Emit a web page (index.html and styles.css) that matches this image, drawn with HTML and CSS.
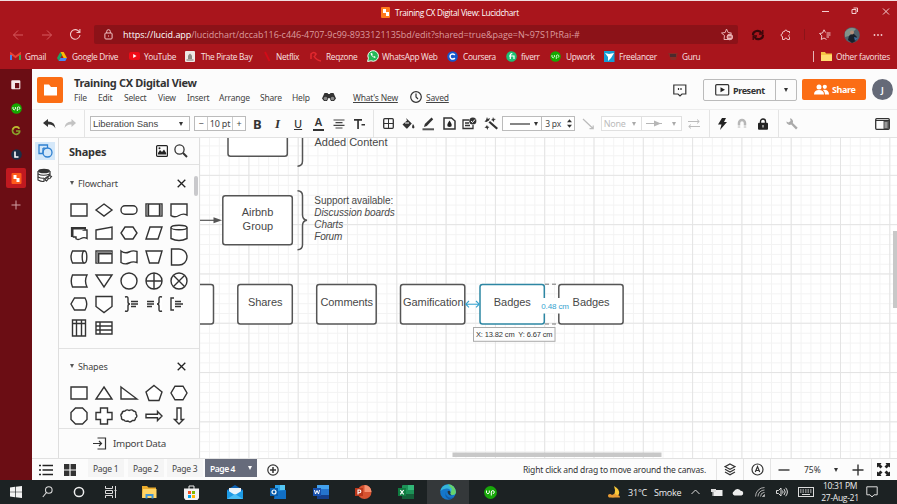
FILE: index.html
```html
<!DOCTYPE html>
<html lang="en">
<head>
<meta charset="utf-8">
<title>Training CX Digital View: Lucidchart</title>
<link rel="stylesheet" href="styles.css">
</head>
<body>
<div class="window">
  <header class="chrome">
    <div class="titlebar">
      <svg width="10" height="11" viewBox="0 0 10 11"><rect width="9" height="11" rx="1" fill="#ff7b1c"/><path d="M2 2h3v3h3v4H5V6H2z" fill="#fff"/></svg>
      <span class="tab-title">Training CX Digital View: Lucidchart</span>
      <svg width="80" height="12" viewBox="0 0 80 12" fill="none" stroke="#f3cfd0"><path d="M5 6.500h7M35 4.500h4v4h-4zM36.500 3h4v4M66 3.500l6 6m0-6l-6 6"/></svg>
    </div>
    <div class="address-row">
      <svg width="13" height="12" viewBox="0 0 13 12" fill="none" stroke="#d65a5e"><path d="M11 6H1.500M6 1.500L1.500 6 6 10.500"/></svg>
      <svg width="13" height="12" viewBox="0 0 13 12" fill="none" stroke="#d65a5e"><path d="M1 6h9.500M6 1.500L10.500 6 6 10.500"/></svg>
      <svg width="13" height="13" viewBox="0 0 13 13" fill="none" stroke="#f0c4c5" stroke-width="1.100"><path d="M10.500 4.200A4.800 4.800 0 1 0 11 7M10.900 1v3.500H7.500"/></svg>
      <div class="url">
        <svg width="9" height="11" viewBox="0 0 9 11" fill="none" stroke="#f0c4c5"><rect x=".9" y="4" width="7.200" height="6" rx="1"/><path d="M2.700 4V2.500a1.800 1.800 0 0 1 3.600 0V4M4.500 6.500v1"/></svg>
        <span class="url-text"><b>https://lucid.app</b>/lucidchart/dccab116-c446-4707-9c99-8933121135bd/edit?shared=true&amp;page=N~97S1PtRai-#</span>
        <svg width="12" height="12" viewBox="0 0 12 12" fill="none" stroke="#e9b0b2"><path d="M8.500 10.500H3l.5-4-3-2.500 3.700-.5L5.500 0l1.600 3.500 3.400.5-1.500 1.500"/><circle cx="8.800" cy="8" r="2.800" fill="#e9b0b2"/><path d="M7.200 8h3.200" stroke="#8f1218"/></svg>
      </div>
      <svg width="14" height="12" viewBox="0 0 14 12" fill="none" stroke="#38060a" stroke-width="2.200"><path d="M2 6a4.500 4 0 0 1 8.500-2M12 6a4.500 4 0 0 1-8.500 2"/><path d="M11.800 1v4H8M2.200 11V7H6" stroke-width="1.300"/></svg>
      <svg width="12" height="12" viewBox="0 0 12 12" fill="none" stroke="#f0c4c5"><path d="M9.500 4.200V2.500H7.300a1.400 1.400 0 0 0-2.800 0H3.800Q2.500 2.500 2.500 4v.7a1.400 1.400 0 0 0 0 2.800V10.500h2a1.400 1.400 0 0 1 2.800 0h2.200V8.200a1.500 1.500 0 0 1 0-2.600"/></svg>
      <i class="chrome-sep"></i>
      <svg width="12" height="12" viewBox="0 0 12 12" fill="none" stroke="#f0c4c5"><path d="M6.500 3.500L5 .8 3.500 4 .5 4.500l2.300 2.300-.5 3.700L5 9l2.500 1.500M7.500 4h4M7.500 6h4M7.500 8H10"/></svg>
      <svg width="16" height="16" viewBox="0 0 16 16"><circle cx="8" cy="8" r="7.800" fill="#51616b"/><path d="M1 5a8 8 0 0 1 11-3L8 6 5 9l-4 1z" fill="#82938a"/><path d="M4 13l1-4 4-3 4 4-1 4-4 2z" fill="#17202b"/><circle cx="8" cy="5.500" r="2" fill="#b4907b"/><path d="M10 10l4 1-3 3z" fill="#426d9e"/></svg>
      <svg width="10" height="4" viewBox="0 0 10 4" fill="#f3cfd0"><circle cx="1.500" cy="2" r=".9"/><circle cx="5" cy="2" r=".9"/><circle cx="8.500" cy="2" r=".9"/></svg>
    </div>
    <nav class="bookmarks">
      <svg width="11" height="9" viewBox="0 0 11 9"><path d="M1 8V1.500l4.500 3.500L10 1.500V8" fill="none" stroke="#ea4335" stroke-width="1.900"/><path d="M1 8V3" stroke="#4285f4" stroke-width="1.900"/><path d="M10 8V3" stroke="#34a853" stroke-width="1.900"/></svg><span>Gmail</span>
      <svg width="10" height="9" viewBox="0 0 10 9"><path d="M3.300 0h3.400L10 6H6.600z" fill="#fbbc05"/><path d="M3.300 0L0 6l1.700 3L5 3z" fill="#1ea362"/><path d="M1.700 9h6.600L10 6H3.400z" fill="#4688f4"/></svg><span>Google Drive</span>
      <svg width="11" height="8" viewBox="0 0 11 8"><rect width="11" height="8" rx="2" fill="#f10b16"/><path d="M4.200 2v4l3.300-2z" fill="#fff"/></svg><span>YouTube</span>
      <svg width="10" height="11" viewBox="0 0 10 11"><rect width="10" height="11" rx="1" fill="#eee8e4"/><path d="M3 8V4.500l2-2 2 2V8z" fill="#8d8a84"/><path d="M1.500 9h7" stroke="#72706b"/></svg><span>The Pirate Bay</span>
      <svg width="7" height="11" viewBox="0 0 7 11"><path d="M1 1l4.500 9" stroke="#d30b18" stroke-width="1.800"/></svg><span>Netflix</span>
      <svg width="12" height="11" viewBox="0 0 12 11"><path d="M1 8V3q3-3 5 0-2 3-2 2 2 4 7 5" stroke="#e2282e" stroke-width="1.600" fill="none"/></svg><span>Reqzone</span>
      <svg width="12" height="12" viewBox="0 0 12 12"><path d="M.6 11.500l.8-3.200A5.300 5.300 0 1 1 4 10.800z" fill="#25b857" stroke="#f4fff7"/><path d="M3.500 3.300c.5 2.500 2 4.200 4.500 4.700L8.700 7 7.200 6l-.8.700L5.200 5.300 5.700 4.200 5 3z" fill="#fff"/></svg><span>WhatsApp Web</span>
      <svg width="11" height="11" viewBox="0 0 11 11"><circle cx="5.500" cy="5.500" r="5.300" fill="#1558cc"/><path d="M7.800 4A2.600 2.600 0 1 0 7.800 7" fill="none" stroke="#fff" stroke-width="1.500"/></svg><span>Coursera</span>
      <svg width="11" height="11" viewBox="0 0 11 11"><circle cx="5.500" cy="5.500" r="5.300" fill="#1dbf73"/><path d="M3 5h5v3M4.300 8V4q0-1.500 2-1.300" fill="none" stroke="#fff" stroke-width="1.200"/></svg><span>fiverr</span>
      <svg width="11" height="11" viewBox="0 0 11 11"><circle cx="5.500" cy="5.500" r="5.300" fill="#15a800"/><path d="M2 4v2q1.200 1.800 2.400 0V4M6.300 8V5a1.300 1.300 0 1 1 1.300 1.500" fill="none" stroke="#d8ffd2" stroke-width=".9"/></svg><span>Upwork</span>
      <svg width="11" height="11" viewBox="0 0 11 11"><rect width="10.500" height="11" fill="#159ed5"/><path d="M1 2l4 1 5-1-3 5-3 3V6z" fill="#fff"/></svg><span>Freelancer</span>
      <svg width="10" height="9" viewBox="0 0 10 9"><path d="M0 1h10L8 8H3z" fill="#8a2a25"/><path d="M2 2h6v3H2z" fill="#4b2b2d"/></svg><span>Guru</span>
      <i class="bookmark-sep"></i>
      <svg width="11" height="9" viewBox="0 0 11 9"><path d="M0 0h4l1 1.500h6V9H0z" fill="#f6c544"/><path d="M0 3h11v6H0z" fill="#ffdc70"/></svg><span>Other favorites</span>
    </nav>
  </header>

  <div class="main">
    <aside class="vtabs">
      <svg width="10" height="10" viewBox="0 0 10 10"><rect x=".8" y=".8" width="8" height="8" rx=".5" fill="#6a0e14" stroke="#f6e9e9" stroke-width="1.100"/><path d="M1 1h3v8H1zM1 1h8v2H1z" fill="#f6e9e9"/></svg>
      <svg width="11" height="11" viewBox="0 0 11 11"><circle cx="5.500" cy="5.500" r="5.300" fill="#15a800"/><path d="M2 4v2q1.200 1.800 2.400 0V4M6.300 8V5a1.300 1.300 0 1 1 1.300 1.500" fill="none" stroke="#fff" stroke-width=".9"/></svg>
      <svg width="10" height="10" viewBox="0 0 10 10"><path d="M8.300 2.600A3.700 3.700 0 1 0 8.600 6V5H5" fill="none" stroke="#88a22a" stroke-width="1.700"/><path d="M8.300 2.600A3.700 3.700 0 0 0 1.700 3.500" fill="none" stroke="#c4b230" stroke-width="1.700"/></svg>
      <svg width="11" height="11" viewBox="0 0 11 11"><circle cx="5.500" cy="5.500" r="5.300" fill="#1c2e45"/><path d="M4 2.500V8h3.500" fill="none" stroke="#fff" stroke-width="1.600"/></svg>
      <div class="vtab-active"><svg width="11" height="11" viewBox="0 0 10 11"><rect width="10" height="11" rx="1" fill="#ff5a1c"/><path d="M2 2h3v3h3v4H5V6H2z" fill="#fff"/></svg></div>
      <svg width="10" height="10" viewBox="0 0 10 10"><path d="M5 .5v9M.5 5h9" stroke="#d2a2a5"/></svg>
    </aside>

    <div class="app">
      <div class="app-header">
        <div class="logo"><svg width="26" height="26" viewBox="0 0 26 26"><path d="M7 7.500h5l2 2.500h6v8.500H7z" fill="#fff"/></svg></div>
        <div class="doc">
          <h1>Training CX Digital View</h1>
          <nav class="menus">
            <span>File</span><span>Edit</span><span>Select</span><span>View</span><span>Insert</span><span>Arrange</span><span>Share</span><span>Help</span>
            <svg width="14" height="10" viewBox="0 0 14 10"><path d="M2.500 1h3l.7 1h1.600l.7-1h3L14 6.500 12 9H9L7.500 6h-1L5 9H2L0 6.500z" fill="#333"/><circle cx="3.500" cy="6.500" r="1.800" fill="#888"/><circle cx="10.500" cy="6.500" r="1.800" fill="#888"/></svg>
            <u>What's New</u>
            <svg width="12" height="12" viewBox="0 0 12 12" fill="none" stroke="#333" stroke-width="1.200"><circle cx="6" cy="6" r="5.300"/><path d="M6 2.500V6l2 2"/></svg>
            <u>Saved</u>
          </nav>
        </div>
        <svg class="feedback" width="14" height="13" viewBox="0 0 14 13" fill="none" stroke="#333" stroke-width="1.200"><path d="M.8 1h12v9H9l-2 2-2-2H.8z"/><path d="M5.500 4v2M8 4v2"/></svg>
        <div class="present">
          <span class="present-main"><svg width="15" height="12" viewBox="0 0 15 12"><rect x=".7" y=".7" width="13" height="10.300" rx="1" fill="none" stroke="#333" stroke-width="1.200"/><path d="M5.500 3.300v5L10 5.800z" fill="#222"/></svg>Present</span>
          <span class="present-more"><i class="caret"></i></span>
        </div>
        <div class="share"><svg width="15" height="11" viewBox="0 0 15 11" fill="#fff"><circle cx="5" cy="3" r="2.500"/><path d="M0 10.500Q0 6 5 6t5 4.500z"/><circle cx="10.800" cy="2.800" r="2.100"/><path d="M10 5.700q5 0 5 4.800h-4Q11 7.500 9 6z"/></svg>Share</div>
        <div class="avatar">J</div>
      </div>

      <div class="toolbar">
        <svg width="13" height="10" viewBox="0 0 13 10"><path d="M5 0L0 4l5 4V5.500q5-.5 7.500 4Q12 2.500 5 2.500z" fill="#333"/></svg>
        <svg width="12" height="10" viewBox="0 0 12 10"><path d="M7.500 0L12 4 7.500 8V5.500Q3 5 .5 9 1 2.500 7.500 2.500z" fill="#c3c3c3"/></svg>
        <i class="sep"></i>
        <div class="field font-field"><span>Liberation Sans</span><i class="caret"></i></div>
        <div class="field size-field"><span>−</span><span>10 pt</span><span>+</span></div>
        <b class="glyph">B</b>
        <em class="glyph glyph-i">I</em>
        <u class="glyph glyph-u">U</u>
        <span class="glyph-a">A</span>
        <svg width="12" height="10" viewBox="0 0 12 10" stroke="#444" stroke-width="1.200"><path d="M.5 1h11M2.500 3.700h7M.5 6.400h11M2.500 9h7"/></svg>
        <svg width="11" height="10" viewBox="0 0 11 10" fill="#333"><path d="M0 0h8v1.800H4.900V10H3.200V1.800H0zM7.500 5h3.500v1.400H7.500z"/></svg>
        <i class="sep"></i>
        <svg width="11" height="11" viewBox="0 0 11 11" fill="none" stroke="#333" stroke-width="1.300"><rect x=".7" y=".7" width="9.600" height="9.600" rx="1"/><path d="M5.500 1v9M1 5.500h9" stroke-width="1"/></svg>
        <svg width="13" height="12" viewBox="0 0 13 12"><path d="M4 0l5.800 5.500-4.300 4.800Q5 11 4.200 10.200L.5 6.500 5 2.500" fill="#333"/><path d="M3 5h4" stroke="#fff"/><path d="M11 6q2.800 4 .2 4.500Q9 10 11 6z" fill="#333"/></svg>
        <svg width="13" height="14" viewBox="0 0 13 14"><path d="M2 10l.8-3L9.500.5l1.700 1.700L4.800 9z" fill="#333"/><path d="M.5 12.300h11.500" stroke="#555" stroke-width="2"/></svg>
        <svg width="13" height="13" viewBox="0 0 13 13"><path d="M1 1h7.500L12 4v8H1z" fill="none" stroke="#333" stroke-width="1.500"/><path d="M6.500 3.500q4.800 6.500 0 6.500t0-6.500z" fill="#222"/></svg>
        <svg width="15" height="13" viewBox="0 0 15 13" fill="none" stroke="#333" stroke-width="1.300"><path d="M7 3H1v8.500h10V8M3 6h4M3 8.500h5"/><circle cx="10.800" cy="4" r="3.600" fill="#333" stroke="none"/><path d="M9 4l1.500 1.500L13 2.500" stroke="#fff" stroke-width="1"/></svg>
        <svg width="15" height="13" viewBox="0 0 15 13" fill="#333"><path d="M4.500 5.500L6 4l8 7-1.500 1.500zM3 0l.8 2L6 1 5 3.500 2.500 5 .5 4.500 2 3zM9 0l.8 1.800L12 2l-1.800 1L10 5 8.500 3.500 7 3l1.500-1zM3 8l.7 1.500L5.500 10 4 11l-.5 2-1-2L.5 10.500 2 9.500z"/></svg>
        <div class="field line-field"><span><svg width="20" height="2" viewBox="0 0 20 2"><path d="M0 1h20" stroke="#333" stroke-width="1.200"/></svg><i class="caret"></i></span><span>3 px <svg width="5" height="9" viewBox="0 0 5 9" fill="#333"><path d="M0 3.300h5L2.500.3zM0 5.700h5L2.500 8.700z"/></svg></span></div>
        <svg width="12" height="12" viewBox="0 0 12 12"><path d="M1 1l10 9.500M7.500 10.700h3.700V7.500" stroke="#bbb" stroke-width="1.200" fill="none"/></svg>
        <div class="field ends-field"><span>None<i class="caret"></i></span><span><svg width="17" height="7" viewBox="0 0 17 7"><path d="M0 3.500h16" stroke="#b6b6b6"/><path d="M8 .5l7 3-7 3z" fill="#b6b6b6"/></svg><i class="caret"></i></span></div>
        <svg width="12" height="10" viewBox="0 0 12 10" stroke="#bbb" fill="none"><path d="M0 2.500h11M9 .5l2.300 2L9 4.500M12 7.500H1M3 5.500l-2.300 2 2.300 2"/></svg>
        <i class="sep"></i>
        <svg width="9" height="12" viewBox="0 0 9 12"><path d="M4 0h4L6 4h3L2 12l1.500-5.500H0z" fill="#222"/></svg>
        <svg width="10" height="11" viewBox="0 0 10 11"><path d="M2 9.500V5a3 3 0 0 1 6 0v4.500" fill="none" stroke="#b7b7b7" stroke-width="2.500"/><path d="M0 8h10" stroke="#fff"/></svg>
        <svg width="10" height="12" viewBox="0 0 10 12"><path d="M2.500 6V3.500a2.500 2.500 0 0 1 5 0V6" fill="none" stroke="#222" stroke-width="1.400"/><rect y="4.700" width="10" height="7" rx="1" fill="#222"/><path d="M5 7v2.500" stroke="#fff"/></svg>
        <i class="sep"></i>
        <svg width="12" height="12" viewBox="0 0 12 12"><path d="M4 .3A3.400 3.400 0 0 1 6.800 5L11.700 9.800 10 11.500 5.200 6.600A3.400 3.400 0 0 1 .4 3.500L2.600 4.600 4.600 3z" fill="#aaa"/></svg>
        <svg width="15" height="12" viewBox="0 0 15 12"><rect x=".7" y=".7" width="13.600" height="10.600" rx="1" fill="none" stroke="#333" stroke-width="1.300"/><path d="M1 2.500h13" stroke="#333"/><path d="M8.500 3h5.500v8H8.500z" fill="#555"/><path d="M9.500 5h3M9.500 7h3M9.500 9h3" stroke="#fff" stroke-width=".8"/></svg>
      </div>

      <div class="workspace">
        <aside class="rail">
          <div class="rail-active"><svg width="15" height="14" viewBox="0 0 15 14" fill="none" stroke="#2f80d0" stroke-width="1.300"><path d="M5 9.500H1V1h8.500v3"/><circle cx="9.500" cy="8.500" r="4.500"/><path d="M5 4.200h2.500M5 4v5"/></svg></div>
          <svg width="16" height="15" viewBox="0 0 16 15"><path d="M1 3v9q4 2 6 1.300V11L13 7V3" fill="#fff" stroke="#333" stroke-width="1.200"/><path d="M1 6q5 2.500 12 0M1 9q3 1.500 6 1.200" fill="none" stroke="#333" stroke-width="1.200"/><ellipse cx="7" cy="3" rx="6" ry="2.300" fill="#333"/><path d="M8 12l2-2.500 1.500 1-2 2.500zM11 9.500l1.500-2 2 1-2 2.500" stroke="#333" stroke-width="1.100" fill="#fff"/></svg>
        </aside>
        <aside class="panel">
          <div class="panel-head"><b>Shapes</b>
            <svg width="12" height="12" viewBox="0 0 12 12"><rect x=".6" y=".6" width="10.800" height="10.800" rx="1" fill="none" stroke="#222" stroke-width="1.200"/><path d="M2 9.500V8l2-3 2 2 2-2.500 2.200 3.500v1.500z" fill="#222"/><circle cx="3.500" cy="3.200" r="1" fill="#222"/></svg>
            <svg width="14" height="14" viewBox="0 0 14 14" fill="none" stroke="#333" stroke-width="1.300"><circle cx="5.500" cy="5.500" r="4.600"/><path d="M9 9l4 4" stroke-width="2"/></svg>
          </div>
          <section class="group flow">
            <h2><i class="caret"></i><span>Flowchart</span><svg width="9" height="9" viewBox="0 0 9 9"><path d="M.7.7l7.600 7.600M8.300.7L.7 8.300" stroke="#222" stroke-width="1.300"/></svg></h2>
            <div class="shapes">
              <svg viewBox="0 0 20 20"><path d="M2 4h16v12H2z"/></svg>
              <svg viewBox="0 0 20 20"><path d="M10 4l8 6-8 6-8-6z"/></svg>
              <svg viewBox="0 0 20 20"><rect x="2" y="5.800" width="16" height="8.400" rx="4"/></svg>
              <svg viewBox="0 0 20 20"><path d="M2 4h16v12H2zM4.500 4v12M15.500 4v12"/><path d="M3.300 4v12M16.700 4v12" stroke-width="1.200" stroke="#777"/></svg>
              <svg viewBox="0 0 20 20"><path d="M2 4h16v11q-4-2-8 .5t-8 .2z"/></svg>
              <svg viewBox="0 0 20 20"><path d="M4.500 7H18v8.500q-3-1.800-6 0t-5 .3V14H4.500z"/><path d="M3.200 14V5.200H17" stroke-width="2.600"/></svg>
              <svg viewBox="0 0 20 20"><path d="M2 7l16-3v12H2z"/></svg>
              <svg viewBox="0 0 20 20"><path d="M6 4h8l4 6-4 6H6l-4-6z"/></svg>
              <svg viewBox="0 0 20 20"><path d="M6 4h12l-4 12H2z"/></svg>
              <svg viewBox="0 0 20 20"><path d="M2 4.500v11q8 4 16 0v-11"/><ellipse cx="10" cy="4.500" rx="8" ry="2.300"/></svg>
              <svg viewBox="0 0 20 20"><path d="M15.500 4h-12q-3 6 0 12h12"/><ellipse cx="15.500" cy="10" rx="2.300" ry="6"/></svg>
              <svg viewBox="0 0 20 20"><path d="M2 4h16v12H2z"/><path d="M3.400 16V5.400H18" stroke="#888" stroke-width="1.400"/><path d="M4.700 16V6.700H18"/></svg>
              <svg viewBox="0 0 20 20"><path d="M2 4q4 3 8 1t8-.5v11q-4-1.500-8 .5t-8-.5z"/></svg>
              <svg viewBox="0 0 20 20"><path d="M2 4h16l-3.500 12h-9z"/></svg>
              <svg viewBox="0 0 20 20"><path d="M2.500 2H10a8 8 0 0 1 0 16H2.500z"/></svg>
              <svg viewBox="0 0 20 20"><path d="M3.500 4H18q-3 6 0 12H3.500Q1 10 3.500 4z"/></svg>
              <svg viewBox="0 0 20 20"><path d="M2 4h16l-8 12z"/></svg>
              <svg viewBox="0 0 20 20"><circle cx="10" cy="10" r="8"/></svg>
              <svg viewBox="0 0 20 20"><circle cx="10" cy="10" r="8"/><path d="M10 2v16M2 10h16"/></svg>
              <svg viewBox="0 0 20 20"><circle cx="10" cy="10" r="8"/><path d="M4.500 4.500l11 11M15.500 4.500l-11 11"/></svg>
              <svg viewBox="0 0 20 20"><path d="M5.500 4H16q3.500 6 0 12H5.500L2 10z"/></svg>
              <svg viewBox="0 0 20 20"><path d="M2 2.500h16v10l-8 6-8-6z"/></svg>
              <svg viewBox="0 0 20 20"><path d="M6 3q3-1 3 1.500V8q0 2 2 2-2 0-2 2v3.500Q9 18 6 17"/><path d="M12 7.500h7M12 10h7M12 12.500h5" stroke-width="1.600"/></svg>
              <svg viewBox="0 0 20 20"><path d="M18 3q-3-1-3 1.500V8q0 2-2 2 2 0 2 2v3.500q0 2.500 3 1.500"/><path d="M3 7.500h7M3 10h7M3 12.500h5" stroke-width="1.600"/></svg>
              <svg viewBox="0 0 20 20"><path d="M5 4H2v12h3"/><path d="M6 7.500h6M6 10h8M6 12.500h6" stroke-width="1.600"/></svg>
              <svg viewBox="0 0 20 20"><path d="M3.500 2h13v16h-13zM3.500 5.500h13M7.500 2v16M12.500 2v16"/></svg>
              <svg viewBox="0 0 20 20"><path d="M2 4h16v12H2zM6 4v12M2 8h16M2 12h16"/></svg>
            </div>
          </section>
          <section class="group basic">
            <h2><i class="caret"></i><span>Shapes</span><svg width="9" height="9" viewBox="0 0 9 9"><path d="M.7.7l7.600 7.600M8.300.7L.7 8.300" stroke="#222" stroke-width="1.300"/></svg></h2>
            <div class="shapes">
              <svg viewBox="0 0 20 20"><path d="M2 4h16v12H2z"/></svg>
              <svg viewBox="0 0 20 20"><path d="M10 4l8 12H2z"/></svg>
              <svg viewBox="0 0 20 20"><path d="M2 4l16 12H2z"/></svg>
              <svg viewBox="0 0 20 20"><path d="M10 2.500L18 9l-3 8.500H5L2 9z"/></svg>
              <svg viewBox="0 0 20 20"><path d="M6 3.200h8l4 6.800-4 6.800H6L2 10z"/></svg>
              <svg viewBox="0 0 20 20"><path d="M6.500 2h7L18 6.500v7L13.500 18h-7L2 13.500v-7z"/></svg>
              <svg viewBox="0 0 20 20"><path d="M6.500 2h7v4.500H18v7h-4.500V18h-7v-4.500H2v-7h4.500z"/></svg>
              <svg viewBox="0 0 20 20"><path d="M6 5q2-2 4-.5Q13 3 14.500 5q3 .5 2.500 3 2 2.500-.5 4 0 3-3 2.500Q11 17 9 15q-3 1-4-1-3 0-2.500-3Q1 8.500 3 7.500 3 5 6 5z"/></svg>
              <svg viewBox="0 0 20 20"><path d="M2 8.300h11.500V5.500L18 10l-4.500 4.500v-2.800H2z"/></svg>
              <svg viewBox="0 0 20 20"><path d="M8 2h4v11.500h2.500L10 18l-4.500-4.500H8z"/></svg>
            </div>
          </section>
          <div class="import"><svg width="14" height="13" viewBox="0 0 14 13" fill="none" stroke="#333" stroke-width="1.200"><path d="M4.500 1h8v11h-8M0 6.500h8.500M6 4l2.500 2.500L6 9"/></svg>Import Data</div>
          <i class="panel-thumb"></i>
        </aside>

        <svg class="canvas" width="697" height="320" viewBox="200 138 697 320">
          <defs>
            <pattern id="minor" x="199.100" y="175" width="9.860" height="9.860" patternUnits="userSpaceOnUse"><path d="M0 .5h9.860M.5 0v9.860" stroke="#f3f3f3" fill="none"/></pattern>
            <pattern id="major" x="199.100" y="174.800" width="49.300" height="49.300" patternUnits="userSpaceOnUse"><path d="M0 .5h49.300M.5 0v49.300" stroke="#e4e4e4" fill="none"/></pattern>
          </defs>
          <rect x="200" y="138" width="697" height="320" fill="#fff"/>
          <rect x="200" y="138" width="697" height="320" fill="url(#minor)"/>
          <rect x="200" y="138" width="697" height="320" fill="url(#major)"/>
          <g fill="#fff" stroke="#555" stroke-width="1.500">
            <rect x="228" y="120" width="59.300" height="36.300" rx="2.500"/>
            <rect x="222.800" y="195.700" width="69.500" height="49" rx="2.500"/>
            <rect x="180" y="284.500" width="33.500" height="39.500" rx="2.500"/>
            <rect x="237.800" y="284.500" width="54.500" height="39.500" rx="2.500"/>
            <rect x="316.700" y="284.500" width="59.500" height="39.500" rx="2.500"/>
            <rect x="400.500" y="284.500" width="64.300" height="39.500" rx="2.500"/>
            <rect x="558.800" y="284.500" width="64.300" height="39.500" rx="2.500"/>
            <rect x="480" y="284.500" width="64.300" height="39.500" rx="2.500" stroke="#2d86a3"/>
          </g>
          <g fill="none" stroke="#555" stroke-width="1.500">
            <path d="M302.500 138v23q0 5-5 5.200M297.500 190.800q5 .2 5 5v19q0 5 4.500 5.500-4.500.5-4.500 5.500v19q0 4.800-5 5"/>
            <path d="M200 220.300h15" stroke-width="1.200"/>
            <path d="M545 284.200h14M545 324h14" stroke="#666" stroke-width=".9" stroke-dasharray="4 3"/>
          </g>
          <path d="M213.500 217.300l8.500 3-8.500 3z" fill="#555"/>
          <g class="node-text">
            <text x="314.500" y="145.700" textLength="73">Added Content</text>
            <text x="241.800" y="216.300" textLength="31.500">Airbnb</text>
            <text x="242.600" y="229.600" textLength="30.500">Group</text>
            <text x="248" y="306.300" textLength="34.500">Shares</text>
            <text x="320.500" y="306.300" textLength="52.500">Comments</text>
            <text x="403" y="306.300" textLength="60.500">Gamification</text>
            <text x="493.800" y="306.300" textLength="37">Badges</text>
            <text x="572.600" y="306.300" textLength="37">Badges</text>
          </g>
          <g class="note-text">
            <text x="314.300" y="204.300" textLength="79">Support available:</text>
            <g font-style="italic"><text x="314.300" y="216.200" textLength="80.500">Discussion boards</text>
            <text x="314.300" y="228.200" textLength="29">Charts</text>
            <text x="314.300" y="240.200" textLength="28">Forum</text></g>
          </g>
          <path d="M465.500 304.200h14M469 301l-3.300 3.200 3.300 3.200M476 301l3.300 3.200-3.300 3.200" stroke="#36a3cf" fill="none" stroke-width="1.100"/>
          <rect x="542" y="298" width="27" height="15.500" fill="#fff"/>
          <text class="gap-text" x="541.300" y="309" textLength="27.700">0.48 cm</text>
          <rect x="473.500" y="327.500" width="81.500" height="13.800" fill="#fdfdfd" stroke="#aaa"/>
          <text class="tip-text" x="476" y="337.400" textLength="76.500" xml:space="preserve">X: 13.82 cm  Y: 6.67 cm</text>
          <rect x="452.500" y="452.500" width="209" height="4.500" fill="#c8c8c8"/>
          <rect x="893" y="231" width="4" height="77" fill="#c8c8c8"/>
        </svg>
      </div>

      <footer class="pages">
        <svg width="14" height="12" viewBox="0 0 14 12"><path d="M0 1.500h2M0 6h2M0 10.500h2M3.500 1.500H14M3.500 6H14M3.500 10.500H14" stroke="#222" stroke-width="1.700"/></svg>
        <svg width="12" height="12" viewBox="0 0 12 12"><path d="M0 0h5.400v5.400H0zM6.600 0H12v5.400H6.600zM0 6.600h5.400V12H0zM6.600 6.600H12V12H6.600z" fill="#333"/></svg>
        <span class="page">Page 1</span><span class="page">Page 2</span><span class="page">Page 3</span>
        <span class="page page-on">Page 4<i class="caret"></i></span>
        <svg width="12" height="12" viewBox="0 0 12 12" fill="none" stroke="#333" stroke-width="1.200"><circle cx="6" cy="6" r="5.200"/><path d="M6 3v6M3 6h6" stroke-width="1.500"/></svg>
        <span class="hint">Right click and drag to move around the canvas.</span>
        <i class="sep"></i>
        <svg width="12" height="13" viewBox="0 0 12 13" fill="none" stroke="#333" stroke-width="1.200"><path d="M6 1l5 2.700-5 2.700-5-2.700zM1 6.300L6 9l5-2.700M1 9l5 2.700L11 9"/></svg>
        <i class="sep"></i>
        <svg width="13" height="13" viewBox="0 0 13 13" fill="none" stroke="#333" stroke-width="1.200"><circle cx="6.500" cy="6.500" r="5.500"/><path d="M4.300 9l2.200-5.500L8.700 9M5 7.500h3"/></svg>
        <i class="sep"></i>
        <svg width="12" height="12" viewBox="0 0 12 12"><path d="M.5 6h11" stroke="#333" stroke-width="1.400"/></svg>
        <span class="zoom">75%</span>
        <i class="caret"></i>
        <svg width="12" height="12" viewBox="0 0 12 12"><path d="M.5 6h11M6 .5v11" stroke="#333" stroke-width="1.400"/></svg>
        <i class="sep"></i>
        <svg width="13" height="13" viewBox="0 0 13 13" fill="#222"><path d="M0 0h4.500L3.400 1.400 5.500 3.500l-2 2L1.400 3.400 0 4.500zM13 0v4.500L11.600 3.400 9.500 5.500l-2-2L9.600 1.400 8.500 0zM0 13V8.500l1.400 1.100L3.500 7.500l2 2-2.100 2.100L4.500 13zM13 13H8.500l1.100-1.400L7.500 9.500l2-2 2.100 2.100L13 8.500z"/></svg>
      </footer>
    </div>
  </div>

  <div class="taskbar">
    <svg width="12" height="12" viewBox="0 0 12 12" fill="#f2f2f2"><path d="M0 1.500l5-.7v4.900H0zM5.700.7L12 0v5.700H5.700zM0 6.300h5v4.900l-5-.7zM5.700 6.300H12V12l-6.300-.7z"/></svg>
    <svg width="11" height="12" viewBox="0 0 11 12" fill="none" stroke="#ddd" stroke-width="1.100"><circle cx="6.800" cy="4" r="3.300"/><path d="M4.500 6.500L.8 11"/></svg>
    <svg width="12" height="12" viewBox="0 0 12 12" fill="none" stroke="#eee" stroke-width="1.500"><circle cx="6" cy="6" r="4.600"/></svg>
    <svg width="12" height="12" viewBox="0 0 12 12" fill="none" stroke="#ddd"><path d="M.5 0v2.500h7V0M.5 4.500h7v3h-7zM.5 12V9.500h7V12M10.500 0v12M9.500 4.500h2"/></svg>
    <svg width="15" height="13" viewBox="0 0 15 13"><path d="M0 0h5l1.500 1.500H14V11H0z" fill="#e9ab2c"/><path d="M1 3h13.500v9H0z" fill="#ffd567"/><path d="M3.500 12.500V8h8v4.500H9.500V10h-4v2.500z" fill="#3f94d8"/></svg>
    <svg width="15" height="15" viewBox="0 0 15 15"><path d="M0 3.500h15V13l-1.500 2h-12L0 13z" fill="#f3f3f3"/><path d="M5 4V1h5v3" fill="none" stroke="#eee"/><path d="M4 6h3v3H4z" fill="#f25022"/><path d="M8 6h3v3H8z" fill="#7fba00"/><path d="M4 10h3v3H4z" fill="#00a4ef"/><path d="M8 10h3v3H8z" fill="#ffb900"/></svg>
    <svg width="16" height="14" viewBox="0 0 16 14"><path d="M0 5l8-5 8 5v9H0z" fill="#0c62b4"/><path d="M2 3h12v7H2z" fill="#e9f4fb"/><path d="M0 5l8 5 8-5v9H0z" fill="#1d9be6"/><path d="M0 14l8-5 8 5z" fill="#49bdf4"/></svg>
    <svg width="16" height="14" viewBox="0 0 16 14"><path d="M5 0h10v10H5z" fill="#2aa0e8"/><path d="M5 6l11-1v9H4z" fill="#116fc4"/><path d="M10 0h5v5h-5z" fill="#54c7f4"/><rect y="3" width="8" height="8" fill="#075ba9"/><circle cx="4" cy="7" r="2" fill="none" stroke="#fff" stroke-width="1.200"/></svg>
    <svg width="16" height="14" viewBox="0 0 16 14"><rect x="4" width="12" height="14" rx="1" fill="#2574ce"/><path d="M4 0h12v4H4z" fill="#43a1ed"/><path d="M4 10h12v4H4z" fill="#153f8c"/><rect y="3" width="8" height="8" fill="#174fac"/><path d="M1.500 5l1 4L4 5.500 5.500 9l1-4" fill="none" stroke="#fff"/></svg>
    <svg width="17" height="14" viewBox="0 0 17 14"><circle cx="9.500" cy="7" r="7" fill="#d65331"/><path d="M9.500 0a7 7 0 0 1 7 7h-7z" fill="#f59070"/><rect y="3" width="8" height="8" fill="#b9371b"/><path d="M3 9.500V5h1.500a1.300 1.300 0 0 1 0 2.700H3" fill="none" stroke="#fff" stroke-width="1.100"/></svg>
    <svg width="16" height="14" viewBox="0 0 16 14"><rect x="4" width="12" height="14" rx="1" fill="#1d9358"/><path d="M10 0h6v5h-6z" fill="#32b878"/><path d="M4 9h12v5H4z" fill="#155f39"/><rect y="3" width="8" height="8" fill="#107c41"/><path d="M2.300 5l3.400 4.300M5.700 5L2.300 9.300" stroke="#fff" stroke-width="1.200"/></svg>
    <div class="task-on"><svg width="16" height="16" viewBox="0 0 16 16"><circle cx="8" cy="8" r="7.800" fill="#1577ca"/><path d="M.3 7A7.800 7.800 0 0 1 15.800 8q0 3-3.500 3-3-.2-1.800-2.500Q11 5 7 4.500 3 4.300.3 7z" fill="#36b5d8"/><path d="M8 .2A7.800 7.800 0 0 1 15.800 8q0 3-3.500 3-2-.2-1.800-2L12 5z" fill="#67d36b"/><path d="M6.500 7q-2 4 2 6.300 3 1 5-.3-2 2.500-5 2.300Q3.500 12 6.500 7z" fill="#145aa5"/><path d="M7.500 7.500Q9 6 10.500 8l-.3 2 1.500 1.500Q8 11.500 7.500 7.500z" fill="#25323a"/></svg></div>
    <svg width="13" height="13" viewBox="0 0 13 13"><circle cx="6.500" cy="6.500" r="6.400" fill="#18a70a"/><path d="M2.500 4.500v2.300q1.400 2 2.800 0V4.500M7.300 9.500V6a1.500 1.500 0 1 1 1.500 1.600" fill="none" stroke="#fff"/></svg>
    <svg width="13" height="13" viewBox="0 0 13 13"><path d="M6 0q6 3 5 8-2 4-8 3Q9 8 6 0z" fill="#f8c83a"/><path d="M0 9q2-2 4 0 3-2 5 0 3 0 3 2.500H1Q0 11 0 9z" fill="#e99c35"/></svg>
    <span>31°C</span><span>Smoke</span>
    <svg width="9" height="6" viewBox="0 0 9 6"><path d="M.5 5l4-4 4 4" fill="none" stroke="#ddd"/></svg>
    <svg width="12" height="9" viewBox="0 0 12 9"><rect x="3" y="2.500" width="8" height="5" fill="#eee" stroke="#eee"/><path d="M0 1h5v3H0z" fill="#ddd"/><path d="M2 4v4" stroke="#ddd"/></svg>
    <svg width="12" height="8" viewBox="0 0 12 8"><path d="M2.500 7.500A2.200 2.200 0 0 1 2 3.300 3.800 3.800 0 0 1 8.700 2.800 2.400 2.400 0 0 1 9.500 7.500z" fill="#eee"/></svg>
    <svg width="10" height="10" viewBox="0 0 10 10" fill="none" stroke="#aaa"><path d="M.5 9.500A9 9 0 0 1 9.500.5M3 9.500A6.500 6.500 0 0 1 9.500 3M5.500 9.500A4 4 0 0 1 9.500 5.500" /><path d="M7.500 9.500l2-2v2z" fill="#ddd"/></svg>
    <svg width="12" height="10" viewBox="0 0 12 10" fill="none" stroke="#ddd"><path d="M.5 3.500h2L5 1v8L2.500 6.500h-2zM6.500 3.500q1.200 1.500 0 3M8 2q2.500 3 0 6M9.700.8q3.400 4.200 0 8.400"/></svg>
    <svg width="16" height="10" viewBox="0 0 16 10" fill="none" stroke="#ddd"><rect x=".5" y=".5" width="15" height="9"/><path d="M2 3h12M2 5h12" stroke-dasharray="1.500 1"/><path d="M4 7.500h8"/></svg>
    <div class="clock"><span>10:31 PM</span><span>27-Aug-21</span></div>
    <svg width="12" height="12" viewBox="0 0 12 12" fill="none" stroke="#ddd"><path d="M.8.800h10.400v8H8L6 11 4 8.800H.8z"/></svg>
  </div>
</div>
</body>
</html>
```
FILE: styles.css
```css
* { box-sizing: border-box; }
body { margin: 0; }
svg { display: block; flex: none; }
i { font-style: normal; }
.window { width: 897px; height: 504px; overflow: hidden; display: flex; flex-direction: column; font-family: "Noto Sans", sans-serif; white-space: nowrap; }

/* browser chrome */
.chrome { height: 69px; background: #a9151c; border-top: 1px solid #f0dede; color: #f8e2e2; font-family: "Open Sans", sans-serif; }
.titlebar { display: grid; grid-template-columns: 14px 420px 80px; align-items: center; height: 23px; padding-left: 381px; }
.titlebar svg:last-child { margin: -4px 0 0 2px; }
.tab-title { font-size: 8.300px; letter-spacing: -0.32px; color: #fff; }
.address-row { display: grid; grid-template-columns: 29px 28px 25px 656px 33px 21px 15px 25px 29px 20px; align-items: center; height: 21px; padding-left: 12px; }
.address-row > svg:nth-child(5) { margin-left: 1px; }
.address-row > svg:nth-child(6) { margin-left: -3px; }
.url { display: grid; grid-template-columns: 19px 598px 12px; align-items: center; width: 644px; height: 19px; padding-left: 10px; background: #8c1218; border-radius: 2px; }
.url-text { font-size: 9px; color: #dc9a9d; letter-spacing: -0.04px; }
.url-text b { font-weight: 400; color: #fff; }
.chrome-sep { width: 1px; height: 11px; background: #8b1419; }
.bookmarks { display: grid; grid-template-columns: 15px 32px 15px 57px 15px 41px 16px 63px 12px 34px 16px 41px 15px 65px 16px 43px 15px 29px 16px 38px 15px 49px 14px 131px 8px 15px 60px; align-items: center; height: 22px; padding-left: 10px; font-size: 8.300px; letter-spacing: -0.3px; }
.bookmark-sep { width: 1px; height: 11px; background: #e5b5b6; }

.main { display: flex; height: 411px; }
.vtabs { display: flex; flex-direction: column; align-items: center; width: 32px; padding-top: 11px; background: #6b0d14; flex: none; }
.vtabs > svg { margin-bottom: 12.500px; }
.vtab-active { display: grid; place-items: center; width: 20px; height: 20px; margin: -4px 0 12px; background: #c11920; border-radius: 2px; }
.app { width: 865px; background: #fcfcfc; color: #333; }

/* document header */
.app-header { display: flex; height: 41px; border-bottom: 1px solid #ededed; }
.logo { width: 26px; height: 26px; margin: 8px 0 0 5px; background: #fb6d14; border-radius: 2px; }
.doc { width: 599px; margin-left: 11px; }
h1 { margin: 6px 0 0; font: 700 11px/15px "Noto Sans", sans-serif; letter-spacing: -0.32px; }
.menus { display: grid; grid-template-columns: 24px 26px 34px 29px 32px 41px 32px 30px 31px 57px 16px 30px; align-items: center; height: 16px; margin-top: -1px; font-size: 8.500px; letter-spacing: -0.2px; color: #444; }
.feedback { margin: 15px 0 0 0; }
.present { display: flex; width: 94px; height: 22px; margin: 10px 0 0 16px; border: 1px solid #bbb; border-radius: 2px; font: 700 9px "Noto Sans", sans-serif; letter-spacing: -0.4px; }
.present-main { display: flex; align-items: center; gap: 3px; width: 72px; padding-left: 11px; border-right: 1px solid #bbb; }
.present-more { display: grid; place-items: center; flex: 1; }
.share { display: flex; align-items: center; gap: 3px; width: 64px; height: 21px; margin: 10px 0 0 5px; padding-left: 12px; background: #fb6d14; border-radius: 2px; color: #fff; font: 700 9px "Noto Sans", sans-serif; letter-spacing: -0.4px; }
.avatar { display: grid; place-items: center; width: 21px; height: 21px; margin: 10px 0 0 6px; border-radius: 50%; background: #656a78; color: #fff; font-size: 9px; font-weight: 600; }
.caret { display: inline-block; width: 0; height: 0; border: solid transparent; border-width: 4px 2.500px 0; border-top-color: #333; }
.sep { width: 1px; height: 100%; background: #e4e4e4; }

/* formatting toolbar */
.toolbar { display: grid; grid-template-columns: 21px 20px 6px 104px 59px 22px 19px 19px 20px 21px 19px 10px 19px 20px 21px 19px 22px 18px 80px 19px 87px 21px 9px 19px 21px 20px 8px 89px 15px; align-items: center; height: 28px; padding-left: 11px; border-bottom: 1px solid #e2e2e2; }
.field { display: flex; align-items: center; height: 15px; border: 1px solid #bbb; font-size: 9px; color: #444; background: #fff; }
.font-field { width: 100px; justify-content: space-between; padding: 0 6px 0 2px; font-family: "Liberation Sans", sans-serif; font-size: 9.500px; letter-spacing: -0.05px; }
.size-field { width: 52px; letter-spacing: -0.2px; }
.size-field span { flex: 1; text-align: center; }
.size-field span:nth-child(2) { flex: none; width: 26px; border: solid #ccc; border-width: 0 1px; }
.glyph { font: 700 13px/14px "Noto Sans", sans-serif; }
.glyph-i { font: italic 700 13px/14px "Liberation Serif", serif; }
.glyph-u { font-weight: 500; font-size: 11px; }
.glyph-a { width: 11px; height: 15px; border-bottom: 2px solid #333; font: 600 11px/12px "Noto Sans", sans-serif; text-align: center; }
.line-field { width: 73px; font-size: 8.500px; }
.line-field span { display: flex; align-items: center; justify-content: flex-end; height: 100%; width: 39px; gap: 4px; padding-right: 3px; border-right: 1px solid #bbb; }
.line-field span:last-child { flex: 1; border: 0; gap: 6px; padding-right: 2px; letter-spacing: -0.2px; }
.ends-field { width: 81px; border-color: #e0e0e0; color: #bbb; }
.ends-field span { display: flex; align-items: center; justify-content: flex-end; width: 40px; gap: 6px; padding-right: 5px; height: 100%; border-right: 1px solid #e0e0e0; letter-spacing: -0.3px; }
.ends-field span:last-child { border: 0; gap: 9px; }
.ends-field .caret { border-top-color: #aaa; }

/* shape panel and canvas */
.workspace { display: flex; height: 320px; }
.rail { display: flex; flex-direction: column; align-items: center; gap: 8px; width: 26px; padding-top: 4px; }
.rail-active { display: grid; place-items: center; width: 20px; height: 18px; background: #d5e8f9; }
.panel { position: relative; width: 142px; border: solid #dedede; border-width: 0 1px; }
.panel-head { display: grid; grid-template-columns: 87px 18px 14px; align-items: center; height: 27px; padding-left: 10px; border-bottom: 1px solid #e2e2e2; }
.panel-head b { font-size: 11px; letter-spacing: -0.25px; }
.group { padding-left: 11px; border-bottom: 1px solid #e2e2e2; }
.flow { height: 184px; padding-top: 9px; }
.basic { height: 80px; padding-top: 8px; }
h2 { display: grid; grid-template-columns: 8px 99px 9px; align-items: center; height: 18px; margin: 0; font-size: 9px; font-weight: 400; letter-spacing: -0.15px; color: #444; }
h2 .caret { border-top-color: #555; }
.shapes { display: grid; grid-template-columns: repeat(5, 25.200px); grid-auto-rows: 23.600px; align-items: center; margin: 6px 0 0 -1.500px; }
.shapes svg { width: 20px; height: 20px; fill: #fff; stroke: #333; stroke-width: 1.400; }
.import { display: flex; align-items: center; gap: 6px; height: 29px; padding-left: 34px; font-size: 9.800px; letter-spacing: -0.3px; color: #444; }
.panel-thumb { position: absolute; right: 1px; top: 38px; width: 4px; height: 20px; border-radius: 2px; background: #c9c9cc; }
.node-text, .note-text, .gap-text, .tip-text { font-family: "Liberation Sans", sans-serif; fill: #484848; }
.node-text { font-size: 11px; }
.note-text { font-size: 10px; }
.gap-text { font-size: 8px; fill: #36a3cf; }
.tip-text { font-size: 7.500px; fill: #333; }

/* page tabs */
.pages { display: grid; grid-template-columns: 25px 24px 40px 39px 39px 61px 256px 193px 8px 19px 8px 19px 7px 26px 30px 18px 20px 6px 13px; align-items: center; height: 22px; padding-left: 7px; border-top: 1px solid #e1e1e1; }
.page { display: flex; align-items: center; width: 36px; height: 18px; margin-top: -3px; padding-left: 5px; background: #f5f5f5; font-size: 8.500px; letter-spacing: -0.3px; color: #444; }
.page-on { justify-content: space-between; width: 52px; margin-left: -1px; padding-right: 5px; background: #666b7b; color: #fff; font-weight: 600; letter-spacing: -0.45px; }
.page-on .caret { border-top-color: #fff; }
.hint { font-size: 8.500px; letter-spacing: -0.18px; }
.zoom { font-size: 8.500px; }
.pages > svg:nth-child(14) { margin-left: 1px; }
.pages > .zoom { margin-left: 1px; }
.pages > .caret { margin-left: 1px; }
.pages > svg:nth-child(17) { margin-left: 1px; }

/* taskbar */
.taskbar { display: grid; grid-template-columns: 32px 31px 32px 37px 42px 43px 43px 43px 42px 43px 29px 57px 124px 20px 26px 37px 20px 21px 23px 21px 22px 20px 48px 12px; align-items: center; height: 24px; padding-left: 10px; background: #1c2223; color: #eee; font: 9px "Open Sans", sans-serif; letter-spacing: -0.2px; }
.task-on { display: grid; place-items: center; width: 42px; height: 24px; background: #34383a; }
.clock { display: flex; flex-direction: column; align-items: center; width: 44px; font-size: 8.500px; line-height: 12px; letter-spacing: -0.3px; }
```
